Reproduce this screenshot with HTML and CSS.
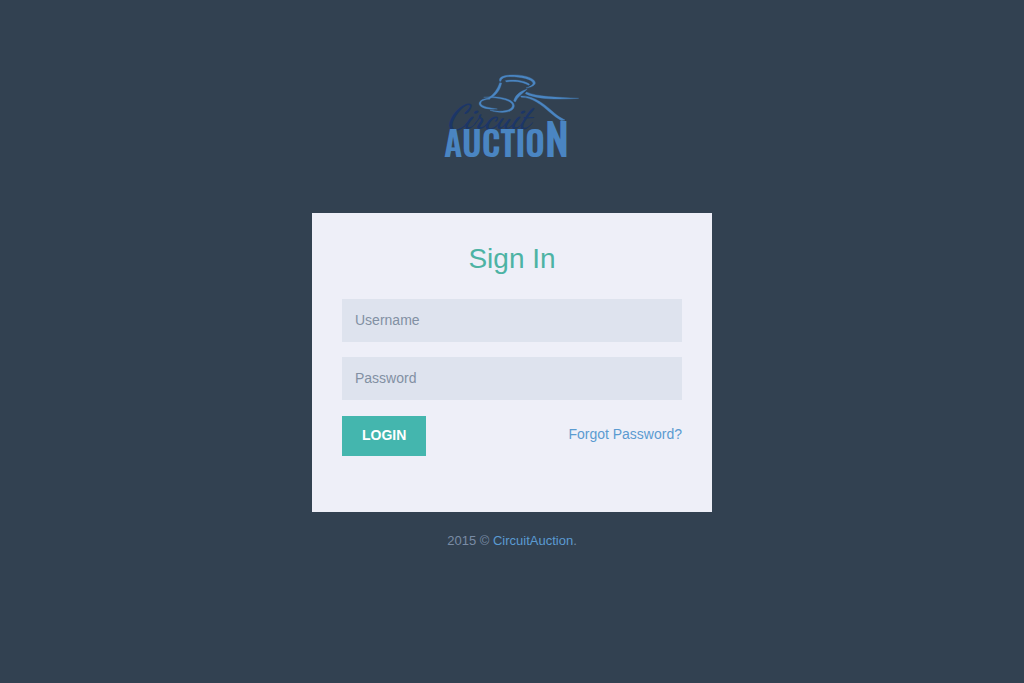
FILE: index.html
```html
<!DOCTYPE html>
<html lang="en">
<head>
<meta charset="utf-8">
<meta name="viewport" content="width=device-width, initial-scale=1">
<title>Sign In - CircuitAuction</title>
<link rel="stylesheet" href="styles.css">
</head>
<body>
<header class="brand">
  <svg class="logo" viewBox="0 0 155 105" role="img" aria-label="Circuit Auction">
    <text class="logo-script" x="12" y="63">Circuit</text>
    <svg class="gavel" width="155" height="105" viewBox="0 0 465 315">
      <path d="M194 49C190 37 203 31 228 30C270 28 302 41 301 55C299 62 287 68 273 69C284 65 294 60 294 54C292 43 257 35 226 35C208 35 199 40 198 49Z"/>
      <path d="M211 47C239 42 270 47 284 58L281 61C264 50 238 47 214 51Z"/>
      <path d="M194 53L200 54C196 74 185 91 164 101L160 99C177 87 187 74 194 53Z"/>
      <path d="M146 97C187 91 238 101 238 122C238 141 203 149 165 136C202 142 232 137 232 121C231 106 190 97 146 97Z"/>
      <path d="M164 99C139 101 130 110 133 119C138 130 162 134 187 132C161 128 140 124 138 116C136 108 150 103 164 103Z"/>
      <path d="M277 72C260 87 248 96 241 111L236 108C240 91 254 79 277 72Z"/>
      <path d="M274 81C306 96 365 96 431 100C370 104 306 104 271 86Z"/>
      <path d="M257 93C295 90 331 119 359 145C369 154 380 160 390 165L379 167C367 160 356 152 346 143C318 119 292 97 259 97Z"/>
    </svg>
    <text class="logo-caps" x="9" y="92">AUCTIO<tspan class="logo-tall">N</tspan></text>
  </svg>
</header>
<main class="card">
  <form class="login">
    <h1 class="title">Sign In</h1>
    <input class="field" type="text" aria-label="Username" placeholder="Username">
    <input class="field" type="password" aria-label="Password" placeholder="Password">
    <div class="actions">
      <button class="submit" type="submit">LOGIN</button>
      <a class="forgot" href="#">Forgot Password?</a>
    </div>
  </form>
</main>
<footer class="copyright">2015 © <a href="#">CircuitAuction</a>.</footer>
</body>
</html>
```
FILE: styles.css
```css
* {
  box-sizing: border-box;
}

body {
  margin: 0;
  padding: 65px 16px 16px;
  background: #324151;
  font-family: "Liberation Sans", Arial, sans-serif;
  font-size: 14px;
  line-height: 20px;
}

a {
  color: #5b9bd1;
  text-decoration: none;
}

.brand {
  display: flex;
  justify-content: center;
  margin-bottom: 43px;
}

.logo {
  width: 155px;
  height: 105px;
}

.gavel {
  fill: #4a85c2;
  stroke: #4a85c2;
  stroke-width: 1px;
}

.logo-script {
  fill: #1c3667;
  font-family: "Dancing Script", "Playball", "Kaushan Script", "Great Vibes", "Liberation Serif", serif;
  font-size: 34px;
  font-style: italic;
  font-weight: 700;
}

.logo-caps {
  fill: #4a85c2;
  font-family: "Oswald", "Roboto Condensed", sans-serif;
  font-size: 34px;
  font-weight: 600;
}

.logo-tall {
  font-size: 44px;
}

.card {
  max-width: 400px;
  margin: 0 auto;
  padding: 30px 30px 56px;
  background: #eeeff8;
}

.login {
  display: flex;
  flex-direction: column;
  gap: 15px;
}

.title {
  margin: 0 0 10px;
  color: #4db3a4;
  font-size: 28px;
  font-weight: 400;
  line-height: 31px;
  text-align: center;
}

.field {
  width: 100%;
  height: 43px;
  padding: 0 13px 2px;
  border: 0;
  background: #dee3ee;
  color: #8290a3;
  font: inherit;
}

.field::placeholder {
  color: #8290a3;
  opacity: 1;
}

.actions {
  display: flex;
  justify-content: space-between;
  align-items: flex-start;
  padding-top: 1px;
}

.submit {
  padding: 9px 20px 11px;
  border: 0;
  background: #44b6ae;
  color: #fff;
  font: inherit;
  font-weight: 700;
  cursor: pointer;
}

.forgot {
  margin-top: 8px;
}

.copyright {
  margin-top: 19px;
  color: #7a8ca5;
  font-size: 13px;
  text-align: center;
}
```
